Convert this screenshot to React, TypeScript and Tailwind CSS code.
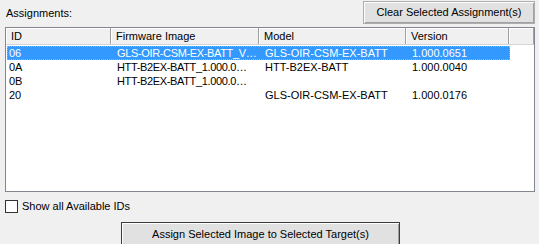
const rows = [
  { id: '06', image: 'GLS-OIR-CSM-EX-BATT_V…', model: 'GLS-OIR-CSM-EX-BATT', version: '1.000.0651', selected: true },
  { id: '0A', image: 'HTT-B2EX-BATT_1.000.0…', model: 'HTT-B2EX-BATT', version: '1.000.0040' },
  { id: '0B', image: 'HTT-B2EX-BATT_1.000.0…', model: '', version: '' },
  { id: '20', image: '', model: 'GLS-OIR-CSM-EX-BATT', version: '1.000.0176' },
]

const cols = [
  { label: 'ID', w: 'w-[105px]' },
  { label: 'Firmware Image', w: 'w-[148px]' },
  { label: 'Model', w: 'w-[147px]' },
  { label: 'Version', w: 'w-[103px]' },
]

function Button({ children, className }: { children: React.ReactNode; className: string }) {
  return (
    <button
      type="button"
      className={`flex items-center justify-center whitespace-nowrap border border-[#adadad] bg-[#e1e1e1] text-[11px] text-black shadow-[inset_1px_1px_0_#fdfdfd,inset_-1px_-1px_0_#a0a0a0] ${className}`}
    >
      {children}
    </button>
  )
}

export default function App() {
  return (
    <div className="h-[244px] w-[539px] overflow-hidden bg-[#f0f0f0] px-[5px] text-[11px] text-black [font-family:Tahoma,'Liberation_Sans','DejaVu_Sans',sans-serif]">
      <div className="flex h-[27px] items-start justify-between">
        <span className="mt-[5px] pl-[1px]">Assignments:</span>
        <Button className="mt-[1px] mr-[-1px] h-[23px] w-[172px]">Clear Selected Assignment(s)</Button>
      </div>

      <div className="h-[165px] w-[530px] border border-[#828790] bg-white">
        <div className="flex h-[17px] border-b border-[#d5d5d5]">
          {cols.map((c) => (
            <div
              key={c.label}
              className={`${c.w} flex items-center whitespace-nowrap border-r border-[#a0a0a0] bg-[#f0f0f0] pl-[5px] pt-[1px] shadow-[inset_1px_1px_0_#ffffff]`}
            >
              {c.label}
            </div>
          ))}
          <div className="flex-1 border-r border-[#a0a0a0] bg-[#f0f0f0] shadow-[inset_1px_1px_0_#ffffff]" />
        </div>
        <div className="pt-[1px] pl-[1px]">
          {rows.map((r) => (
            <div
              key={r.id}
              className={`flex h-[14px] w-[503px] items-center whitespace-nowrap leading-none ${
                r.selected ? 'bg-[#3399ff] text-white outline-1 outline-dotted outline-offset-[-1px] outline-[#f5a623]' : ''
              }`}
            >
              <span className="w-[105px] shrink-0 pl-[2px]">{r.id}</span>
              <span className="w-[148px] shrink-0 pl-[5px] tracking-[-0.35px]">{r.image}</span>
              <span className="w-[147px] shrink-0 pl-[5px]">{r.model}</span>
              <span className="w-[103px] shrink-0 pl-[5px]">{r.version}</span>
            </div>
          ))}
        </div>
      </div>

      <label className="mt-[8px] flex h-[13px] items-center gap-[4px]">
        <span className="h-[13px] w-[13px] border border-[#333333] bg-white" />
        <span>Show all Available IDs</span>
      </label>

      <div className="mt-[9px] flex pl-[116px]">
        <button
          type="button"
          className="flex h-[24px] w-[279px] items-center justify-center whitespace-nowrap border border-[#3c3c3c] bg-[#e1e1e1] text-[11px] shadow-[inset_1px_1px_0_#fdfdfd,inset_-1px_-1px_0_#a0a0a0]"
        >
          Assign Selected Image to Selected Target(s)
        </button>
      </div>
    </div>
  )
}
